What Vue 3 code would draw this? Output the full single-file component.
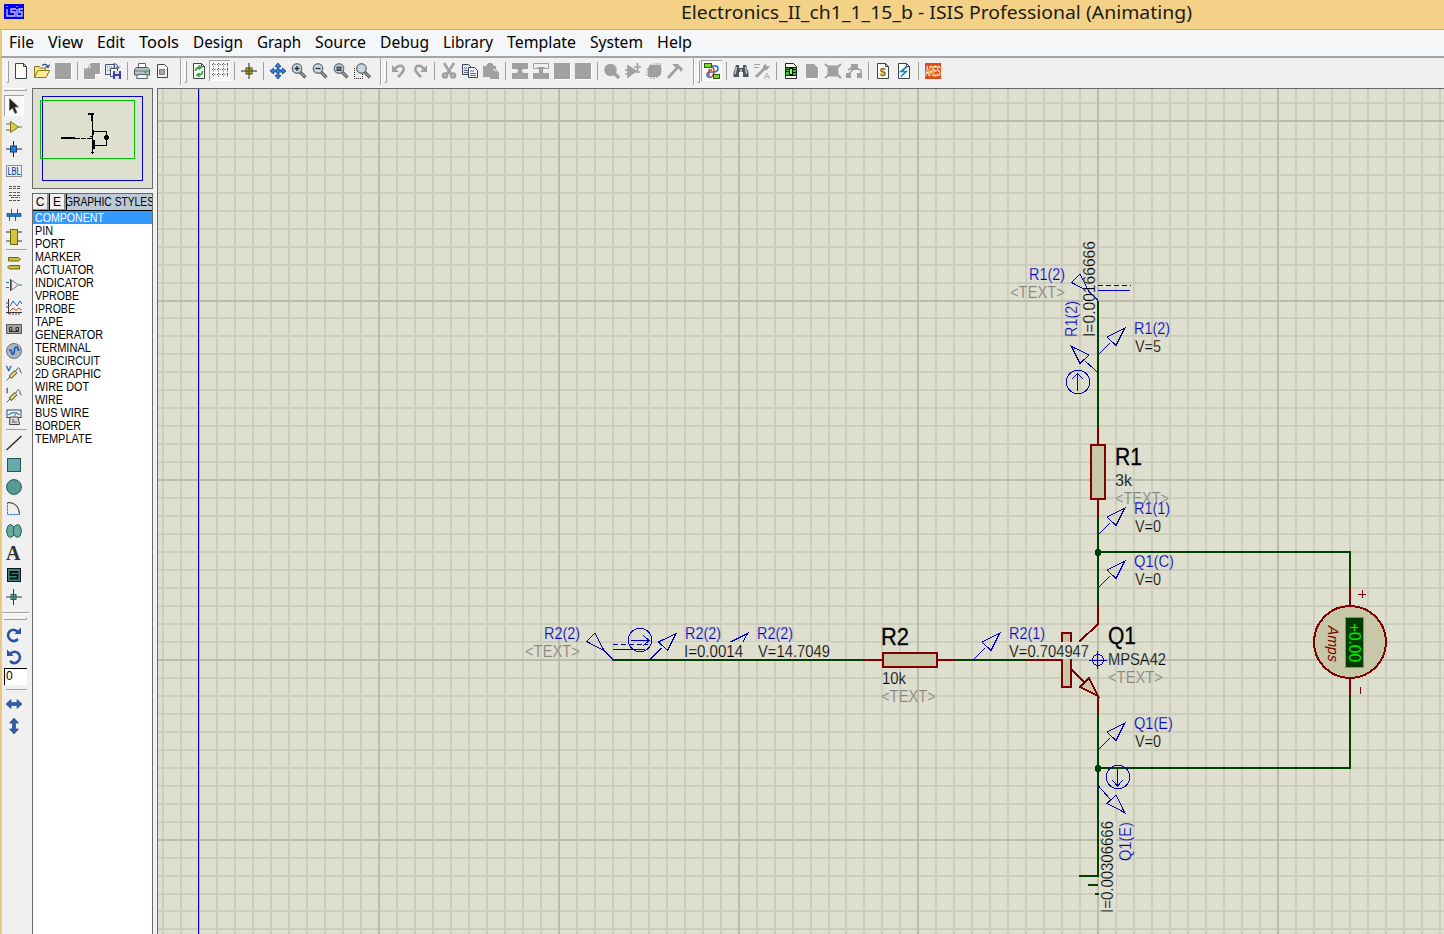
<script setup>
const menus = [
  ['File', 25], ['View', 35], ['Edit', 28], ['Tools', 40], ['Design', 50], ['Graph', 44],
  ['Source', 51], ['Debug', 49], ['Library', 50], ['Template', 69], ['System', 53], ['Help', 35],
]

const page = (inner = '') =>
  `<path d="M2.500 .5h8l3 3v12h-11z" fill="#fdfdf4" stroke="#3c444c"/><path d="M10.500.5v3h3" fill="none" stroke="#3c444c"/>${inner}`
const greyBlock = '<path d="M1 1h16v16h-16z" fill="#fff"/><path d="M0 0h16v16h-16z" fill="#a0a0a0"/>'
const lens = (inner) =>
  `<path d="M9 9l5.500 5.500" stroke="#666" stroke-width="3.200"/><path d="M9.500 9.500l4.500 4.500" stroke="#bbb" stroke-width="1"/><circle cx="6" cy="5.500" r="4.700" fill="#c9dbe0" stroke="#68737a" stroke-width="1.400"/>${inner}`
const probe = (letter) =>
  `<text x="0" y="6" font-size="8" font-family="Liberation Sans, sans-serif" fill="#0046a8" stroke="#0046a8" stroke-width=".3">${letter}</text><path d="M.5 15.500l3.500-3.500M10 6c1.500-4.500 4-4 4 0l1.500 2.500" fill="none" stroke="#555"/><path d="M4 12.500l6-6" stroke="#555" stroke-width="4"/><path d="M4.500 12l5-5" stroke="#e6df5a" stroke-width="2.400"/>`

const icons = {
  new: page(),
  open: '<path d="M.5 14.500v-11h5l1 1.500h5v3" fill="#f6e27a" stroke="#8d7a20"/><path d="M.5 14.500l3.500-7h11.500l-3.500 7z" fill="#fbee96" stroke="#8d7a20"/><path d="M8 2.500q4-3 6 1.500m-2.500-.5l2.500 1 1.500-3" fill="none" stroke="#2b4f86" stroke-width="1.200"/>',
  save: greyBlock,
  import: '<path d="M5 1h12v11h-5v5h-11v-11h4z" fill="#fff"/><path d="M0 5h4v-2l3-3h9v11h-5v5h-11z" fill="#a0a0a0"/><path d="M1.500 6.500q1-4 5-3l-1.500-1.500m1.500 1.500l-1.500 2" stroke="#eee" fill="none"/>',
  export: '<path d="M.5 1.500h9v10h-9z" fill="#e8eef6" stroke="#44546a"/><path d="M2 4h7M2 7h7" stroke="#d04040" stroke-dasharray="1 1"/><path d="M8 1q5-1 5 4m-2-1.500l2 2 2-2" fill="none" stroke="#234f96"/><path d="M5.500 5.500h7v8h-7z" fill="#fff" stroke="#44546a"/><path d="M8 8h8v8h-8z" fill="#3c3ca8"/><path d="M10 8h4v3h-4zM10 13h4v3h-4z" fill="#d8dcf4"/>',
  print: '<path d="M4.500.5h7v6h-7z" fill="#fff" stroke="#596470"/><path d="M.5 6.500l2-2h11l2 2v5.500h-15z" fill="#b8bfc6" stroke="#4c545c"/><path d="M1 8h14" stroke="#707880"/><circle cx="11.500" cy="9" r="1.200" fill="#1fc02f"/><path d="M3.500 11.500h9l1 4h-11z" fill="#f6f6f6" stroke="#596470"/>',
  printarea: '<path d="M2.500 1.500h7l3 3v10h-10z" fill="#f6f6f6" stroke="#3c444c"/><rect x="4.500" y="6.500" width="5" height="5" fill="#9aa" stroke="#333" stroke-dasharray="1 1"/>',
  refresh: page('<path d="M4.500 8q0-3.500 4-3.500m-1-2l2.500 2-2.500 2M11.500 8q0 4-4 4m1-2l-2.500 2 2.500 2" fill="none" stroke="#1d9a2c" stroke-width="1.500"/>'),
  grid: '<path d="M0 1.500h16M0 6.500h16M0 11.500h16" stroke="#444" stroke-dasharray="1 1.500"/><path d="M1.500 0v15M6.500 0v15M11.500 0v15M15.500 0v15" stroke="#555" stroke-dasharray="1 1.500"/>',
  origin: '<path d="M8 0v16M0 8h16" stroke="#222"/><rect x="5" y="5" width="6" height="6" fill="#b8ae28" stroke="#4b4710"/><path d="M8 5v6M5 8h6" stroke="#4b4710"/>',
  pan: '<path d="M8 0l3 3.500h-2v3.500h3.500v-2l3.500 3-3.500 3v-2h-3.500v3.500h2l-3 3.500-3-3.500h2v-3.500h-3.500v2l-3.500-3 3.500-3v2h3.500v-3.500h-2z" fill="#2f86e0" stroke="#133f7c" stroke-width=".8"/>',
  zoomin: lens('<path d="M3.500 5.500h5M6 3v5" stroke="#223" stroke-width="1.300"/>'),
  zoomout: lens('<path d="M3.500 5.500h5" stroke="#223" stroke-width="1.300"/>'),
  zoomall: lens('<rect x="4" y="4" width="4" height="3.500" fill="#778" stroke="#334"/>'),
  zoomarea: `<path d="M9 5.500h-8.500v10h8v-5" fill="none" stroke="#222" stroke-dasharray="1 1"/><g transform="translate(1.500 0)">${lens('')}</g>`,
  undo: '<path d="M1 2v7h7z" fill="#a0a0a0"/><path d="M4 6q3-4 7-3 4 3-1 8l-3 3" fill="none" stroke="#a0a0a0" stroke-width="2.600"/>',
  redo: '<g transform="matrix(-1 0 0 1 16 0)"><path d="M1 2v7h7z" fill="#a0a0a0"/><path d="M4 6q3-4 7-3 4 3-1 8l-3 3" fill="none" stroke="#a0a0a0" stroke-width="2.600"/></g>',
  cut: '<g fill="none" stroke="#a0a0a0" stroke-width="2.600"><path d="M3 0l7 11M13 0l-7 11"/><circle cx="4" cy="12.500" r="2"/><circle cx="12" cy="12.500" r="2"/></g>',
  copy: '<path d="M.5 1.500h6l3 3v7h-9z" fill="#e4eaf2" stroke="#36455c"/><path d="M6.500 4.500h6l3 3v7h-9z" fill="#f5f8fc" stroke="#36455c"/><path d="M8 8h4M8 10.500h6M8 12.500h6M2 5h3M2 7.500h4M2 9.500h4" stroke="#5a6c86"/>',
  paste: '<path d="M0 3h3l2-3h4l2 3h2v3l3 4v6h-9v-2h-7z" fill="#a0a0a0"/><path d="M10 6.500h2l1 2" stroke="#eee" fill="none"/>',
  blkcopy: '<path d="M0 0h16v6h-5l-1 2 1 2h5v6h-16v-6h5l1-2-1-2h-5z" fill="#a0a0a0"/>',
  blkmove: '<path d="M.5 .5h15v5h-15z" fill="none" stroke="#a0a0a0"/><path d="M4 4h8l-2 2v4h6v6h-16v-6h6v-4z" fill="#a0a0a0"/>',
  block: greyBlock,
  pick: '<path d="M10 10l5 5" stroke="#a0a0a0" stroke-width="3.500"/><circle cx="6.500" cy="7" r="6.200" fill="#a0a0a0"/>',
  make: '<path d="M3 3l8 5-8 6zM0 7h4M0 11h4M9 9h6M12.500 0v8M9 4h7" fill="#a0a0a0" stroke="#a0a0a0" stroke-width="1.600"/>',
  pkg: '<path d="M4 2h11v9l-3 3h-10v-9z" fill="#a0a0a0"/><path d="M5 1v15M8 0v16M11 0v15M14 0v12M0 6h16M0 9h16M0 12h14" stroke="#a0a0a0"/>',
  hammer: '<path d="M1 15l9-10" stroke="#a0a0a0" stroke-width="2.800"/><path d="M5 1h6l5 5-2 3-2-3-3-1z" fill="#a0a0a0"/>',
  wire: '<path d="M7 3h5q2 0 2 3t-5 3h-3q-3 0-3 3t5 2" fill="none" stroke="#2370ca" stroke-width="1.500"/><path d="M7 4q3 0 3 4t-2 5h2M8 7h-3v6" stroke="#da3c20" stroke-width="1.500" fill="none"/><rect x=".5" y=".5" width="7" height="4" fill="#75da2d" stroke="#295d14"/><rect x="9.500" y="11.500" width="6" height="4" fill="#75da2d" stroke="#295d14"/>',
  find: '<path d="M3 2h3v3h4v-3h3l2.500 8v4h-5.500v-5h-4v5h-5.500v-4z" fill="#4b5560"/><path d="M3.500 4l-1.500 7M12.500 4l1 7" stroke="#b8c2c8" stroke-width="1.500"/><path d="M7 6h2v3h-2z" fill="#aab3b8"/>',
  props: '<path d="M0 1.500h6M0 4.500h5" stroke="#a0a0a0"/><path d="M2 14l10-10" stroke="#a0a0a0" stroke-width="3"/><path d="M9 3l3-3v3h4l-3 4h-3z" fill="#a0a0a0"/><text x="10" y="16" font-size="8.500" font-family="Liberation Sans, sans-serif" fill="#909090">A</text>',
  design: '<path d="M2.500 .5h8l3 3v12h-11z" fill="#fdfdf4" stroke="#222"/><rect x="3" y="4" width="10" height="9" fill="#32c52e"/><path d="M3 4.500h10M3 8.500h4M3 12.500h10M10 6.500h3M10 9.500h3M3 6.500h3" stroke="#111"/><rect x="6.500" y="5.500" width="3" height="6" fill="#9eeb70" stroke="#111"/>',
  sheet: '<path d="M3 2h8l4 4v11h-12z" fill="#fff"/><path d="M2 1h8l4 4v10h-12z" fill="#a0a0a0"/>',
  delsheet: '<rect x="2.500" y="2.500" width="11" height="11" fill="#a0a0a0"/><path d="M0 1l16 14M16 1l-16 14" stroke="#a0a0a0" stroke-width="2"/>',
  child: '<path d="M5 1h7v6h-7zM0 10h5v5h-5zM11 10h5v5h-5z" fill="#a0a0a0"/><path d="M8 5l-5 6M10 5l5 2v5M2 7l5-3" stroke="#a0a0a0" stroke-width="1.500" fill="none"/>',
  bom: page('<text x="4.800" y="13" font-size="11" font-weight="bold" font-family="Liberation Sans, sans-serif" fill="#77751a">$</text>'),
  erc: page('<path d="M11 3.500l-6 5h5l-5 5" fill="none" stroke="#1688dc" stroke-width="1.700"/>'),
  ares: '<rect width="16" height="16" fill="#df4918"/><text x=".5" y="13" font-size="14" textLength="15" lengthAdjust="spacingAndGlyphs" font-family="Liberation Sans, sans-serif" fill="#fff1e8" stroke="#fff1e8" stroke-width=".3">ARES</text>',

  pointer: '<path d="M3.500.5v12l3-2.500 2.500 5.500 2-1-2.500-5.500h4z" fill="#222" stroke="#555" stroke-width=".6"/>',
  comp: '<path d="M0 5h5M0 11h5M11 8h5" stroke="#66703c"/><path d="M4.500 2.500l8 5.500-8 5.500z" fill="#d8d04a" stroke="#77701c"/>',
  dot: '<path d="M7.500 0v16M0 8h16" stroke="#222"/><rect x="4.500" y="5" width="6" height="6" fill="#2680d2" stroke="#123f7a"/>',
  lbl: '<rect x=".5" y="2.500" width="15" height="11" fill="none" stroke="#333" stroke-dasharray="1 1"/><text x="1.500" y="11.700" font-size="10" textLength="13" lengthAdjust="spacingAndGlyphs" font-family="Liberation Sans, sans-serif" fill="#0046a8" stroke="#0046a8" stroke-width=".2">LBL</text>',
  script: '<path d="M3 1.500h11M3 7.500h11M3 10.500h11M3 15.500h11M3 3.500h11M5 12.500h9" stroke="#555" stroke-dasharray="3 1"/>',
  bus: '<path d="M5.500 2v6M11.500 2v6M3.500 8v6M9.500 8v6" stroke="#1268b0"/><rect x="1" y="6.500" width="14" height="3" fill="#1b77ce" stroke="#0b3f88" stroke-width=".6"/>',
  sub: '<path d="M0 3h4M0 12h4M12 3h4M12 12h4" stroke="#333"/><rect x="4.500" y=".5" width="7" height="15" fill="#cfc63f" stroke="#6b6516"/>',
  term: '<path d="M2.500 2.500h10l2 1.700-2 1.800h-10zM13.500 10.500h-10l-2 1.700 2 1.800h10z" fill="#c9bf35" stroke="#6b6516"/>',
  pin: '<path d="M5.500 3l7 5-7 5z" fill="none" stroke="#777"/><path d="M4.500 2v12" stroke="#444"/><path d="M0 5.500h3M0 10.500h3M13 8h3" stroke="#118080"/>',
  graph: '<path d="M2.500 0v15M0 13.500h16" stroke="#333"/><path d="M4 13v3M7 13v3M10 13v3M13 13v3M0 4h3M0 8h3" stroke="#444"/><path d="M4 7l3-5 4 5 3-5 2 3" fill="none" stroke="#1560c8"/><path d="M4 12l3-3 3 2.500 3-2.500 3 2.500" fill="none" stroke="#d34320"/>',
  tape: '<rect x=".5" y="3.500" width="15" height="9" fill="#a2a2a2" stroke="#5c5c5c"/><path d="M3.500 6.500h2.500v3h-2.500zM10 6.500h2.500v3h-2.500zM3 10.500h10" fill="none" stroke="#333"/>',
  gen: '<circle cx="8" cy="8" r="7.500" fill="#aeb5be" stroke="#6c737c"/><path d="M3.500 8q1-2 2 0 0 4 2 3 1-1 1-4 0-3 2-3 1.500 0 1.500 3h1.500" fill="none" stroke="#0e50b4" stroke-width="1.500"/>',
  vprobe: probe('V'),
  iprobe: probe('I'),
  meter: '<rect x="1" y="1" width="14" height="7.500" fill="#f4f8fb" stroke="#444"/><path d="M2.500 6q5-5 11 0" fill="none" stroke="#3c82c6" stroke-width="1.500"/><path d="M8 7.500l3-4" stroke="#d03a20"/><path d="M4 8h8l1.500 7.500h-10z" fill="#dadada" stroke="#444"/><path d="M6 11h2M6 13h5" stroke="#555"/>',
  line: '<path d="M.5 15l15-14" stroke="#2c2c2c" stroke-width="1.400"/>',
  box: '<rect x="1.500" y="1.500" width="13" height="13" fill="#68aaa9" stroke="#235a5b"/>',
  circle: '<circle cx="8" cy="8" r="7.400" fill="#559b98" stroke="#285553"/>',
  arc: '<path d="M1.500 1.500v12h12" fill="none" stroke="#145fc0" stroke-dasharray="2 1"/><path d="M2 1.500q11 0 11.500 12" fill="none" stroke="#222"/>',
  path: '<path d="M8 4q3-4 6-1 3 5 0 10-3 3-6-1-3 4-6 1-3-5 0-10 3-3 6 1z" fill="#67a9a0" stroke="#285c54"/><path d="M8 4q-2 4 0 8" fill="none" stroke="#285c54"/>',
  text: '<text x="0" y="15" font-size="20" font-family="Liberation Serif, serif" font-weight="bold" fill="#303030">A</text>',
  symbol: '<rect x="1.500" y="1.500" width="13" height="13" fill="#3b8580" stroke="#111"/><path d="M12.500 5h-8v3h7v3.500h-8" fill="none" stroke="#0a1515" stroke-width="2"/>',
  marker: '<path d="M7.500 0v16M0 8h16" stroke="#333"/><rect x="5" y="5.500" width="5" height="5" fill="#73b0a8" stroke="#285c54"/><path d="M7.500 5v6M5 8h6" stroke="#285c54"/>',
  cw: '<path d="M12 12q-4 4-8 0.500-4-4.500 0-8.500 4-3 8 1" fill="none" stroke="#2654a2" stroke-width="2.500"/><path d="M8.500 7h6.500v-6.500z" fill="#2654a2"/>',
  mirrorx: '<path d="M0 8l5-4.500v3h6v-3l5 4.500-5 4.500v-3h-6v3z" fill="#305fae" stroke="#173a78" stroke-width=".6"/>',
}
icons.ccw = `<g transform="matrix(-1 0 0 1 16 0)">${icons.cw}</g>`
icons.mirrory = `<g transform="rotate(90 8 8)">${icons.mirrorx}</g>`

const bars = [
  { w: 178, items: 'new open save | import export | print printarea' },
  { w: 200, items: 'refresh grid* | origin | pan zoomin zoomout zoomall zoomarea' },
  { w: 313, items: 'undo redo | cut copy paste | blkcopy blkmove block block | pick make pkg hammer' },
  { w: 260, items: 'wire* | find props | design sheet delsheet child | bom erc | ares' },
].map((b) => ({ w: b.w, items: b.items.split(' ') }))
const side = 'pointer* comp dot lbl script bus sub | term pin graph tape gen vprobe iprobe meter | line box circle arc path text symbol marker'.split(' ')

const styles = ['COMPONENT', 'PIN', 'PORT', 'MARKER', 'ACTUATOR', 'INDICATOR', 'VPROBE', 'IPROBE', 'TAPE', 'GENERATOR', 'TERMINAL', 'SUBCIRCUIT', '2D GRAPHIC', 'WIRE DOT', 'WIRE', 'BUS WIRE', 'BORDER', 'TEMPLATE']
const styleWidths = [68, 17, 29, 45, 58, 58, 43, 39, 27, 67, 55, 64, 65, 53, 27, 53, 45, 56]

// Grid: a minor line every 18 units, a major line every tenth.
const gridX = Array.from({ length: 73 }, (_, i) => i - 2).map((k) => ({ p: Math.round(199.2 + k * 17.98), major: k % 10 === 0 }))
const gridY = Array.from({ length: 47 }, (_, i) => i - 1).map((k) => ({ p: Math.round(120.8 + k * 17.97), major: k % 10 === 0 }))
const grid = [false, true].map((m) => ({
  m,
  d: gridX.filter((g) => g.major === m).map((g) => `M${g.p} 89V934`).join('') + gridY.filter((g) => g.major === m).map((g) => `M158 ${g.p}H1444`).join(''),
}))

const probes = [[1098, 355], [1098, 535], [1098, 588], [1098, 750], [649.5, 660], [973, 660]]
const patches = [[1083, 241, 14, 96], [684, 642, 146, 17], [1009, 642, 80, 17], [1101, 821, 15, 91]]
// [text, x, baseline, width, class, rotation]
const labels = [
  ['R1(2)', 1029, 280, 36, 'b'], ['<TEXT>', 1010, 298, 55, 'g'],
  ['R1(2)', 1134, 334, 36, 'b'], ['V=5', 1135, 352, 26, 'k'],
  ['I=0.00166666', 1095, 337, 96, 'k', -90], ['R1(2)', 1077, 337, 36, 'b', -90],
  ['R1', 1115, 465, 27, 'n'], ['3k', 1115, 486, 17, 'k'], ['<TEXT>', 1115, 504, 54, 'g'],
  ['R1(1)', 1134, 514, 36, 'b'], ['V=0', 1135, 532, 26, 'k'],
  ['Q1(C)', 1134, 567, 40, 'b'], ['V=0', 1135, 585, 26, 'k'],
  ['R2(2)', 544, 639, 36, 'b'], ['<TEXT>', 525, 657, 55, 'g'],
  ['R2(2)', 685, 639, 36, 'b'], ['I=0.0014', 684, 657, 59, 'k'],
  ['R2(2)', 757, 639, 36, 'b'], ['V=14.7049', 758, 657, 72, 'k'],
  ['R2', 881, 645, 28, 'n'], ['10k', 882, 684, 24, 'k'], ['<TEXT>', 881, 702, 55, 'g'],
  ['R2(1)', 1009, 639, 36, 'b'], ['V=0.704947', 1009, 657, 80, 'k'],
  ['Q1', 1108, 644, 28, 'n'], ['MPSA42', 1108, 665, 58, 'k'], ['<TEXT>', 1108, 683, 55, 'g'],
  ['Q1(E)', 1134, 729, 39, 'b'], ['V=0', 1135, 747, 26, 'k'],
  ['I=0.00306666', 1113, 913, 92, 'k', -90], ['Q1(E)', 1131, 861, 39, 'b', -90],
]
</script>

<template>
  <div class="app">
    <header class="title">
      <svg class="logo" width="20" height="15" viewBox="0 0 20 15">
        <rect width="20" height="15" fill="#0000f0" />
        <path d="M3 5v7h3M3 2v1M12 5H7v3h4v4H6M13 5v7h2M13 2v1M19 5h-4v3h3v4h-4" fill="none" stroke="#c8c8ff" stroke-width="1.300" />
      </svg>
      <svg class="caption" width="514" height="28"><text x="1" y="19" textLength="511" lengthAdjust="spacingAndGlyphs">Electronics_II_ch1_1_15_b - ISIS Professional (Animating)</text></svg>
    </header>
    <nav class="menu">
      <svg v-for="[m, w] in menus" :key="m" :width="w" height="25"><text x="0" y="17" :textLength="w" lengthAdjust="spacingAndGlyphs">{{ m }}</text></svg>
    </nav>
    <div class="toolbar">
      <div v-for="(b, i) in bars" :key="i" class="group" :style="{ width: b.w + 'px' }">
        <i class="grip"></i>
        <template v-for="(n, j) in b.items" :key="j">
          <i v-if="n === '|'" class="sep"></i>
          <span v-else class="tool" :class="{ on: n.endsWith('*') }"><svg width="16" height="16" viewBox="0 0 16 16" v-html="icons[n.replace('*', '')]"></svg></span>
        </template>
      </div>
    </div>
    <main class="body">
      <aside class="side">
        <i class="hgrip"></i>
        <template v-for="(n, j) in side" :key="j">
          <i v-if="n === '|'" class="hsep"></i>
          <span v-else class="stool" :class="{ on: n.endsWith('*') }"><svg width="16" height="16" viewBox="0 0 16 16" v-html="icons[n.replace('*', '')]"></svg></span>
        </template>
        <i class="divider"></i>
        <i class="hgrip low"></i>
        <span class="stool"><svg width="16" height="16" viewBox="0 0 16 16" v-html="icons.cw"></svg></span>
        <span class="stool"><svg width="16" height="16" viewBox="0 0 16 16" v-html="icons.ccw"></svg></span>
        <div class="angle">0</div>
        <i class="hsep last"></i>
        <span class="stool"><svg width="16" height="16" viewBox="0 0 16 16" v-html="icons.mirrorx"></svg></span>
        <span class="stool"><svg width="16" height="16" viewBox="0 0 16 16" v-html="icons.mirrory"></svg></span>
      </aside>
      <section class="panels">
        <svg class="preview" width="119" height="99" viewBox="33 89 119 99" fill="none" shape-rendering="crispEdges">
          <rect x="42.500" y="96.500" width="100" height="84" stroke="#0000c0" />
          <rect x="40.500" y="100.500" width="94" height="58" stroke="#00c000" />
          <g stroke="#000">
            <path d="M61 138h14" stroke-width="2" />
            <path d="M75 138.500h17" stroke-dasharray="5 1" />
            <path d="M88 114h6M92 114v7M92.500 130v5M93.500 140v9" stroke-width="2" />
            <path d="M92.500 118v36M93 131.500h13.500v14h-13.500M91 152.500h3M90 136.500h2" />
          </g>
          <ellipse cx="106.500" cy="137.500" rx="2.500" ry="2.800" fill="#000" />
        </svg>
        <div class="list">
          <div class="head"><b>C</b><b>E</b><svg width="86" height="16"><text x="-2" y="12" textLength="89" lengthAdjust="spacingAndGlyphs">GRAPHIC STYLES</text></svg></div>
          <div v-for="(s, i) in styles" :key="s" class="row" :class="{ sel: i === 0 }">
            <svg width="117" height="13"><text x="1" y="11" :textLength="styleWidths[i] + 1" lengthAdjust="spacingAndGlyphs">{{ s }}</text></svg>
          </div>
        </div>
      </section>
      <section class="sheet">
        <svg width="1286" height="845" viewBox="158 89 1286 845" fill="none">
          <g shape-rendering="crispEdges">
            <path v-for="g in grid" :key="g.m" :d="g.d" :stroke="g.m ? '#bcbcad' : '#cdcdbe'" stroke-width="2" />
            <path d="M198.500 89V934" stroke="#0000c0" />
          </g>
          <g shape-rendering="crispEdges" stroke="#004000" stroke-width="2">
            <path d="M1098 301V427M1098 517V605M1098 552H1350V587M1350 696V768H1098M1098 714V876H1079M1088 885H1098M1095 894H1099M612 660H864M955 660H1025" />
            <path d="M1096 549h4v1h1v5h-1v1h-4v-1h-1v-5h1zM1096 765h4v1h1v5h-1v1h-4v-1h-1v-5h1z" fill="#004000" stroke="none" />
          </g>
          <g shape-rendering="crispEdges" stroke="#800000" stroke-width="2" fill="#c8c8a8">
            <path d="M1098 427V444M1098 500V517M864 660H882M938 660H955M1025 660H1061M1350 587V606M1350 678V696M1098 695V714" />
            <path d="M1098 605V624L1079 642M1071 669L1085 683" fill="none" />
            <rect x="1091" y="445" width="14" height="54" />
            <rect x="883" y="653" width="54" height="14" />
            <rect x="1062" y="633" width="9" height="54" />
            <path d="M1089 678L1080 687L1098 696Z" />
            <circle cx="1350" cy="642" r="36" />
            <path d="M1358 594.500h8M1362.500 590v8M1360.500 687v7" stroke-width="1" />
          </g>
          <g shape-rendering="crispEdges" stroke="#0000c0">
            <g v-for="([x, y], i) in probes" :key="i" :transform="`translate(${x} ${y})`"><path d="M.5 -.5L12 -12M9 -18L26.500 -26.500L18 -9.500Z" /></g>
            <path d="M730.500 642L747.500 633.500L743 642" />
            <path d="M1098 300.500L1089 291.500L1071.500 282.500L1080 274L1089 291.500" />
            <path d="M613 659.500L604 650.500L586.500 641.500L595 633L604 650.500" />
            <path d="M1098 285.500h33M613 644.500h35" stroke-dasharray="5 3" />
            <path d="M1098 290.500h32M613 649.500h32" />
            <path d="M1098 372.500L1085 361M1071.500 346.500L1089 355L1080 363.500ZM1077.500 391V373M1072 379L1077.500 373.500L1083 379" />
            <circle cx="1078" cy="382" r="11.700" /><circle cx="640" cy="640" r="11.700" /><circle cx="1118" cy="777" r="11.700" />
            <path d="M631 640.500H649M643 635L649 640.500L643 646M1117.500 768V786M1112 780L1117.500 786L1123 780M1098 785.500L1110 799M1124.500 812.500L1107 803.500L1116 795Z" />
          </g>
          <rect v-for="(p, i) in patches" :key="i" :x="p[0]" :y="p[1]" :width="p[2]" :height="p[3]" fill="#dfdfcf" />
          <g shape-rendering="crispEdges" stroke="#0000c0">
            <circle cx="1098" cy="660" r="5.500" />
            <path d="M1089 660.500h18M1097.500 651v18M1098 300.500L1089 291.500L1083 280" />
          </g>
          <text v-for="(t, i) in labels" :key="i" :class="t[4]" :textLength="t[3]" lengthAdjust="spacingAndGlyphs" :transform="`translate(${t[1]} ${t[2]}) rotate(${t[5] || 0})`">{{ t[0] }}</text>
          <rect x="1345.500" y="617.500" width="18" height="50" fill="#003c00" stroke="#00f000" shape-rendering="crispEdges" />
          <text class="lcd" textLength="39" lengthAdjust="spacingAndGlyphs" transform="translate(1349 623) rotate(90)">+0.00</text>
          <text class="amps" textLength="36" lengthAdjust="spacingAndGlyphs" transform="translate(1328 625) rotate(90) skewX(-12)">Amps</text>
        </svg>
      </section>
    </main>
  </div>
</template>

<style scoped>
.app { width: 1444px; height: 934px; overflow: hidden; display: flex; flex-direction: column; background: #f0f0f0; box-sizing: border-box; font-family: "Liberation Sans", Arial, sans-serif; }
svg { display: block; flex: none; }
i { display: block; flex: none; box-sizing: border-box; }
.title { height: 30px; flex: none; display: flex; align-items: flex-start; background: #f3d287; border-bottom: 1px solid #d1b26d; box-sizing: border-box; }
.logo { margin: 4px 0 0 4px; }
.caption { margin-left: 656px; }
.caption text { font: 18.500px "Noto Sans", "Open Sans", sans-serif; fill: #1c1a14; }
.menu { height: 28px; flex: none; box-sizing: border-box; display: flex; gap: 14px; padding: 1px 0 0 7px; background: #f5f6f8; border-bottom: 2px solid #a5a5a5; border-left: 2px solid #e9c87f; }
.menu svg { overflow: visible; }
.menu text { font: 16px "Noto Sans", "Open Sans", sans-serif; fill: #000; }
.toolbar { height: 30px; flex: none; display: flex; border-left: 2px solid #e9c87f; }
.group { display: flex; align-items: center; height: 27px; box-sizing: border-box; border-left: 1px solid #a0a0a0; box-shadow: inset 1px 0 #fff; flex: none; padding-bottom: 2px; }
.group:first-child { border-left-color: #f0f0f0; }
.grip { width: 3px; height: 22px; margin: 3px 1px 0 3px; border-right: 1px solid #a0a0a0; border-bottom: 1px solid #a0a0a0; border-left: 1px solid #fff; }
.sep { width: 1px; height: 18px; background: #a0a0a0; margin: 0 3px 0 4px; }
.tool { width: 21px; height: 21px; display: flex; align-items: center; justify-content: center; flex: none; box-sizing: border-box; }
.tool svg, .stool svg { overflow: visible; }
.on { background: #f9f9f9; box-shadow: inset 1px 1px #a0a0a0, inset -1px -1px #fff; }
.body { flex: 1; display: flex; min-height: 0; }
.side { width: 30px; flex: none; box-sizing: border-box; border-left: 2px solid #e9c87f; display: flex; flex-direction: column; }
.hgrip { width: 23px; height: 3px; margin: 0 0 3px 2px; border-bottom: 1px solid #a0a0a0; border-right: 1px solid #a0a0a0; border-top: 1px solid #fff; }
.hgrip.low { margin: 3px 0 4px 2px; }
.stool { width: 20px; height: 22px; margin-left: 2px; display: flex; align-items: center; justify-content: center; flex: none; }
.stool.on { height: 21px; margin-top: 1px; }
.hsep { width: 21px; height: 1px; margin: 1px 0 2px 4px; background: #a0a0a0; }
.hsep.last { margin: 4px 0 3px 4px; }
.divider { height: 2px; width: 27px; margin-top: 4px; background: #a0a0a0; border-bottom: 1px solid #fff; }
.angle { width: 23px; height: 17px; margin-left: 2px; box-sizing: border-box; border-left: 1px solid #000; border-top: 1px solid #000; background: #fff; font-size: 12px; line-height: 15px; padding-left: 1px; }
.panels { width: 127px; flex: none; padding: 0 4px 0 2px; box-sizing: border-box; display: flex; flex-direction: column; gap: 4px; }
.preview { background: #dfdfcf; border: 1px solid #696969; }
.list { width: 119px; flex: 1; border: 1px solid #696969; border-bottom: 0; background: #fff; }
.head { display: flex; height: 16px; background: #bccad8; border-bottom: 1px solid #000; overflow: hidden; }
.head b { width: 16px; height: 16px; box-sizing: border-box; border-right: 2px solid #909090; border-bottom: 1px solid #909090; background: #f0f0f0; margin-right: 1px; font: 12px/16px "Liberation Sans", sans-serif; text-align: center; box-shadow: 1px 0 #000; }
.head svg { min-width: 0; flex: 1; overflow: hidden; }
.head text, .row text { font: 12px "Liberation Sans", sans-serif; fill: #000; }
.row { height: 13px; padding-left: 1px; }
.row.sel { background: #3399ff; }
.row.sel text { fill: #fff; }
.sheet { width: 1287px; flex: none; box-sizing: border-box; border-left: 1px solid #696969; border-top: 1px solid #696969; background: #dfdfcf; }
.sheet text { font-family: "Liberation Sans", Arial, sans-serif; font-size: 16.500px; }
.sheet .k { fill: #000; stroke: #dfdfcf; stroke-width: .25px; }
.sheet .b { fill: #0000c0; stroke: #dfdfcf; stroke-width: .25px; }
.sheet .g { fill: #85857f; stroke: #dfdfcf; stroke-width: .2px; }
.sheet .n { font-size: 23.500px; fill: #000; stroke: #000; stroke-width: .3px; }
.sheet .lcd { fill: #00f000; }
.sheet .amps { fill: #800000; font-size: 15px; }
</style>

<style>
body { margin: 0; overflow: hidden; }
</style>
